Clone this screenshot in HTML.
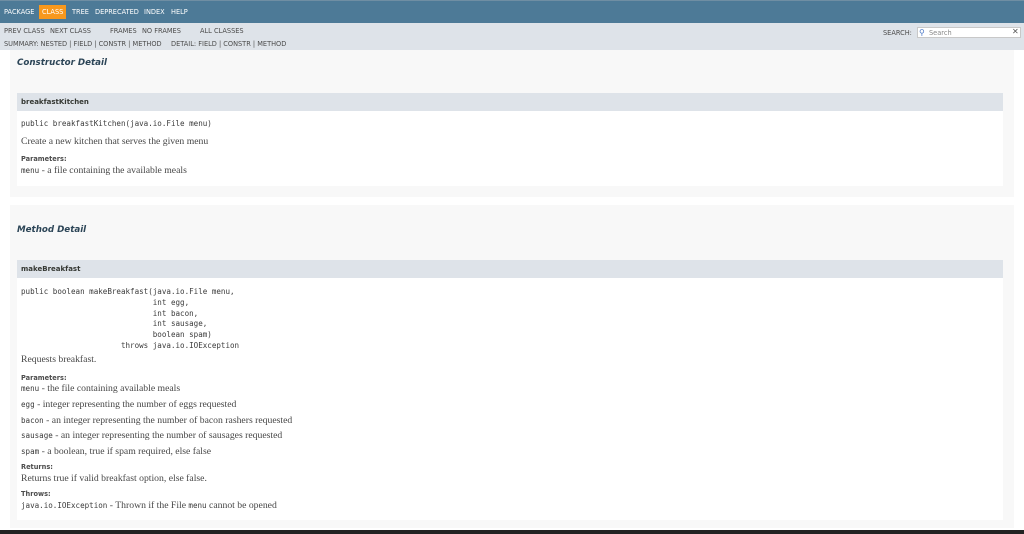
<!DOCTYPE html>
<html><head><style>
*{margin:0;padding:0;box-sizing:border-box}
body{width:1024px;height:534px;overflow:hidden;background:#fff;position:relative;font-family:"DejaVu Sans","Liberation Sans",sans-serif;color:#353833}
.a{position:absolute;white-space:pre}
.nav{font-size:6.6px;color:#fff}
.sub{font-size:6.6px;color:#4c4c4c}
.ser{font-family:"Liberation Serif",serif;font-size:9.7px;color:#474747}
.mono{font-family:"DejaVu Sans Mono","Liberation Mono",monospace;font-size:7.55px;color:#3a3a3a}
.lbl{font-size:6.6px;font-weight:bold;color:#4c4c4c}
.h3{font-size:8.7px;font-weight:bold;font-style:italic;color:#2c4557}
.h4{font-size:7px;font-weight:bold;color:#353833}
</style></head><body>
<div class="a" style="left:0;top:0;width:1024px;height:23px;background:#4d7a97"></div>
<div class="a" style="left:0;top:0;width:1024px;height:1px;background:#6f8ea3"></div>
<div class="a" style="left:39px;top:5px;width:27px;height:14px;background:#f8981d"></div>
<div class="a nav" style="left:4px;top:8px">PACKAGE</div>
<div class="a nav" style="left:42px;top:8px">CLASS</div>
<div class="a nav" style="left:72px;top:8px">TREE</div>
<div class="a nav" style="left:95px;top:8px">DEPRECATED</div>
<div class="a nav" style="left:144px;top:8px">INDEX</div>
<div class="a nav" style="left:171px;top:8px">HELP</div>
<div class="a" style="left:0;top:23px;width:1024px;height:27px;background:#dee3e9"></div>
<div class="a sub" style="left:4px;top:27px">PREV CLASS</div>
<div class="a sub" style="left:50px;top:27px">NEXT CLASS</div>
<div class="a sub" style="left:110px;top:27px">FRAMES</div>
<div class="a sub" style="left:142px;top:27px">NO FRAMES</div>
<div class="a sub" style="left:200px;top:27px">ALL CLASSES</div>
<div class="a sub" style="left:4px;top:40px">SUMMARY: NESTED | FIELD | CONSTR | METHOD</div>
<div class="a sub" style="left:171px;top:40px">DETAIL: FIELD | CONSTR | METHOD</div>
<div class="a sub" style="left:883px;top:29px">SEARCH:</div>
<div class="a" style="left:917px;top:27px;width:104px;height:11px;background:#fff;border:1px solid #c8c8c8"></div>
<div class="a" style="left:919px;top:28px;font-size:8px;color:#4d7ac7">&#9906;</div>
<div class="a" style="left:929px;top:29px;font-size:6.6px;color:#888">Search</div>
<div class="a" style="left:1012px;top:27px;font-size:8px;font-weight:bold;color:#555">✕</div>

<div class="a" style="left:10px;top:50px;width:1004px;height:147px;background:#f8f8f8"></div>
<div class="a h3" style="left:17px;top:58px">Constructor Detail</div>
<div class="a" style="left:17px;top:93px;width:986px;height:93px;background:#fff"></div>
<div class="a" style="left:17px;top:93px;width:986px;height:18px;background:#dee3e9"></div>
<div class="a h4" style="left:21px;top:98px">breakfastKitchen</div>
<div class="a mono" style="left:21px;top:119px">public breakfastKitchen(java.io.File menu)</div>
<div class="a ser" style="left:21px;top:136px">Create a new kitchen that serves the given menu</div>
<div class="a lbl" style="left:21px;top:155px">Parameters:</div>
<div class="a ser" style="left:21px;top:165px"><span class="mono">menu</span> - a file containing the available meals</div>

<div class="a" style="left:10px;top:205px;width:1004px;height:323px;background:#f8f8f8"></div>
<div class="a h3" style="left:17px;top:225px">Method Detail</div>
<div class="a" style="left:17px;top:260px;width:986px;height:260px;background:#fff"></div>
<div class="a" style="left:17px;top:260px;width:986px;height:18px;background:#dee3e9"></div>
<div class="a h4" style="left:21px;top:265px">makeBreakfast</div>
<div class="a mono" style="left:21px;top:287px;line-height:10.8px">public boolean makeBreakfast(java.io.File menu,
                             int egg,
                             int bacon,
                             int sausage,
                             boolean spam)
                      throws java.io.IOException</div>
<div class="a ser" style="left:21px;top:354px">Requests breakfast.</div>
<div class="a lbl" style="left:21px;top:374px">Parameters:</div>
<div class="a ser" style="left:21px;top:383px"><span class="mono">menu</span> - the file containing available meals</div>
<div class="a ser" style="left:21px;top:399px"><span class="mono">egg</span> - integer representing the number of eggs requested</div>
<div class="a ser" style="left:21px;top:415px"><span class="mono">bacon</span> - an integer representing the number of bacon rashers requested</div>
<div class="a ser" style="left:21px;top:430px"><span class="mono">sausage</span> - an integer representing the number of sausages requested</div>
<div class="a ser" style="left:21px;top:446px"><span class="mono">spam</span> - a boolean, true if spam required, else false</div>
<div class="a lbl" style="left:21px;top:463px">Returns:</div>
<div class="a ser" style="left:21px;top:473px">Returns true if valid breakfast option, else false.</div>
<div class="a lbl" style="left:21px;top:490px">Throws:</div>
<div class="a ser" style="left:21px;top:500px"><span class="mono">java.io.IOException</span> - Thrown if the File <span class="mono">menu</span> cannot be opened</div>
<div class="a" style="left:0;top:530px;width:1024px;height:4px;background:#222"></div>
</body></html>
